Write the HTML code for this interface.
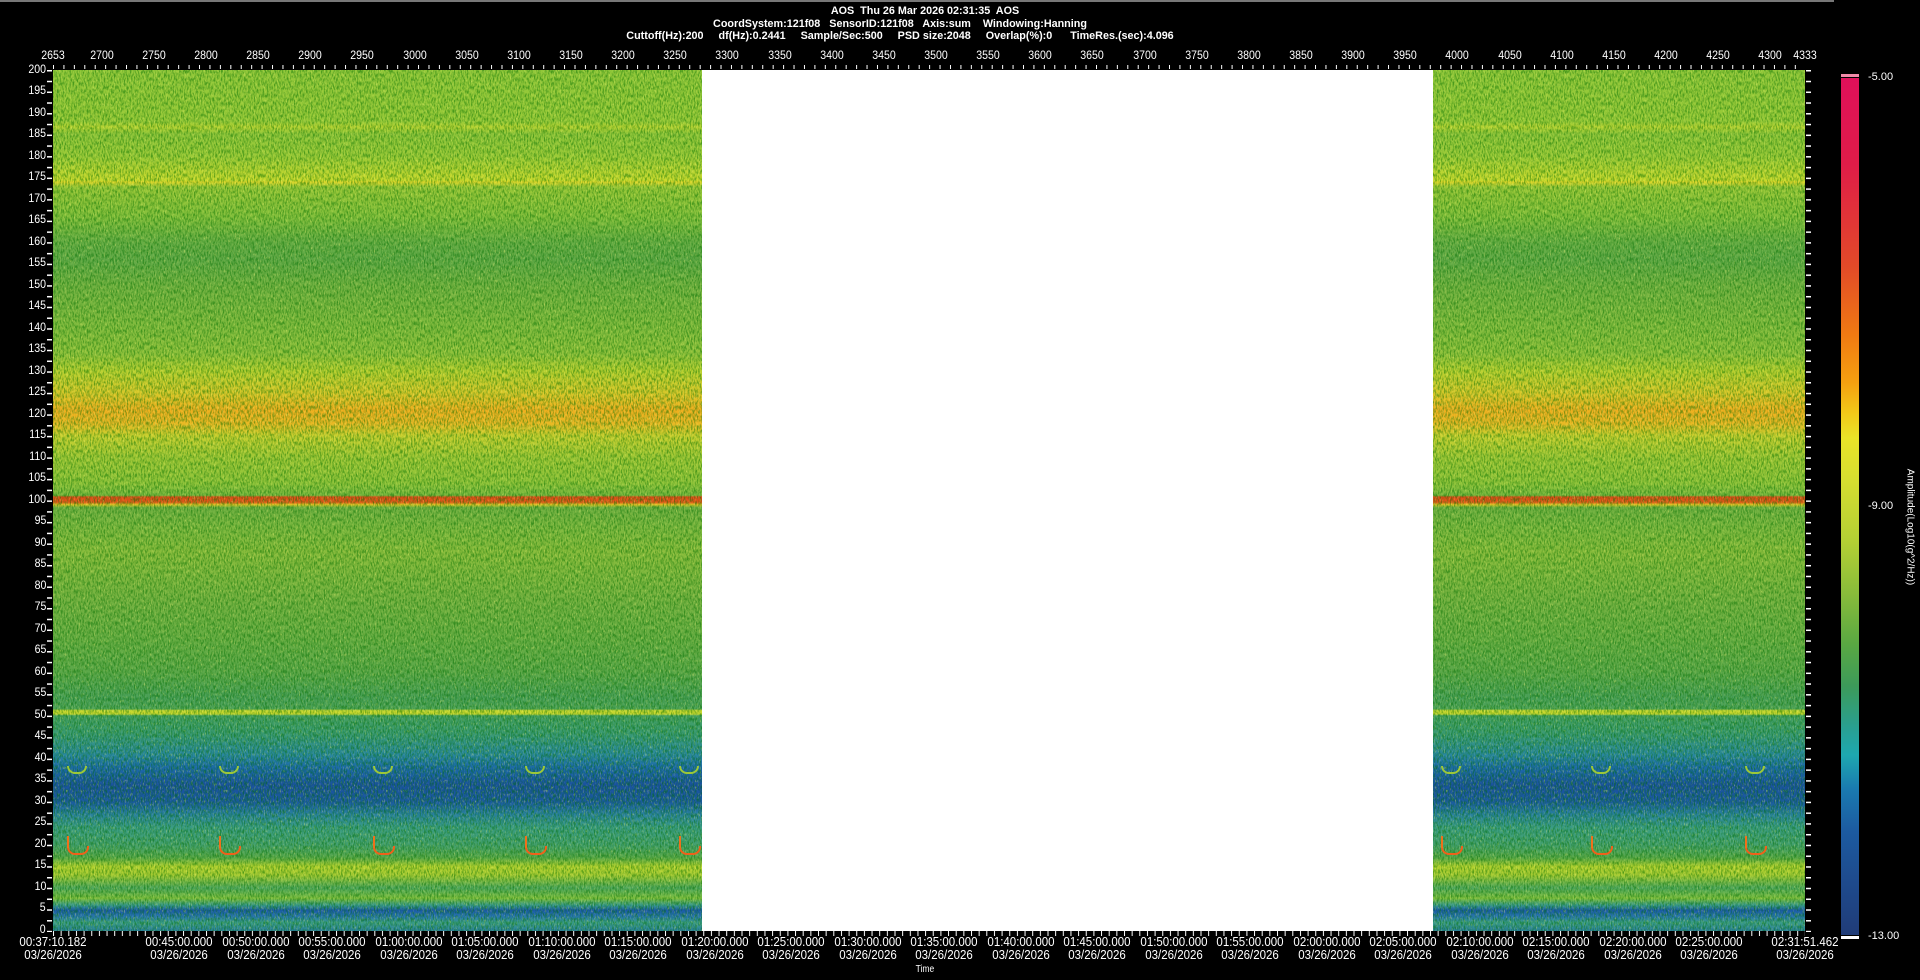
<!DOCTYPE html>
<html><head><meta charset="utf-8"><style>
*{margin:0;padding:0;box-sizing:border-box}
body{width:1920px;height:980px;background:#000;overflow:hidden;position:relative;font-family:"Liberation Sans",sans-serif;color:#fff}
.a{position:absolute;white-space:nowrap}
.hd{font-size:11px;font-weight:bold;transform:scaleX(.98);transform-origin:center;text-align:center;width:800px;left:500px}
.tl{font-size:12px;transform:translateX(-50%) scaleX(.88);top:48px}
.ll{font-size:12px;transform:scaleX(.88);transform-origin:right;right:1874px;text-align:right}
.bl{font-size:12.5px;transform:translateX(-50%) scaleX(.92);top:936px;text-align:center;line-height:13px}
.spec{position:absolute;top:70px;height:861px;background:linear-gradient(to bottom,
#92c83a 0%,#98ca38 6%,#b8d434 6.6%,#90c63a 7.4%,#9ccb38 10%,#c9da2e 12.8%,#e0d82c 13%,#9ac838 13.6%,#84c03c 17%,#68ae46 20%,#62aa48 22%,#72b242 25%,#82bc3e 30%,#90c23c 33%,#b8d030 35%,#d8c82a 37.5%,#f0b020 39.5%,#eab824 41%,#c8d030 42.5%,#a0c836 45%,#90c43a 48%,#78b840 49.4%,#e04a18 49.6%,#e05a18 50.2%,#e0c828 50.5%,#70b042 50.8%,#7cb840 53%,#88bc3c 56%,#74b242 62%,#68ae44 66%,#5ca84a 70%,#4aa05a 73%,#50a45a 74.2%,#c8d830 74.4%,#c8d830 74.8%,#44a064 75%,#3a9a74 77%,#2a88a0 79.5%,#1c6aaa 81%,#1a52a0 83%,#1a5aa0 85%,#2a82a0 86.5%,#3a9c84 88%,#44a070 90%,#58a84a 91.5%,#b4d230 92.5%,#a8cc34 93.5%,#50a860 95%,#80c040 96.2%,#3a9a90 97%,#1a5aa8 97.6%,#2a7ab0 98.4%,#3a9c88 99%,#2a80a0 100%);overflow:hidden}
.mk{position:absolute;width:22px;height:9px;border:2px solid #f0601a;border-top:none;border-radius:0 0 8px 8px}
.mk:before{content:"";position:absolute;left:-2px;top:-10px;width:2px;height:12px;background:#f0701a}
.mg{position:absolute;width:20px;height:8px;border:2px solid #9cc838;border-top:none;border-radius:0 0 8px 8px}
</style></head><body>
<div class="a" style="left:0;top:0;width:1834px;height:2px;background:#777"></div>
<div class="a hd" style="top:5px;left:525px">AOS&nbsp; Thu 26 Mar 2026 02:31:35&nbsp; AOS</div>
<div class="a hd" style="top:18px">CoordSystem:121f08&nbsp;&nbsp; SensorID:121f08&nbsp;&nbsp; Axis:sum&nbsp;&nbsp;&nbsp; Windowing:Hanning</div>
<div class="a hd" style="top:30px">Cuttoff(Hz):200&nbsp;&nbsp;&nbsp;&nbsp; df(Hz):0.2441&nbsp;&nbsp;&nbsp;&nbsp; Sample/Sec:500&nbsp;&nbsp;&nbsp;&nbsp; PSD size:2048&nbsp;&nbsp;&nbsp;&nbsp; Overlap(%):0&nbsp;&nbsp;&nbsp;&nbsp;&nbsp; TimeRes.(sec):4.096</div>

<svg class="a" style="left:0;top:0" width="1920" height="980">
<defs><pattern id="tt" x="53" y="0" width="10.43" height="80" patternUnits="userSpaceOnUse"><rect x="0" y="65" width="1" height="4" fill="#fff"/></pattern>
<pattern id="tb" x="53" y="0" width="7.65" height="980" patternUnits="userSpaceOnUse"><rect x="0" y="931" width="1" height="5" fill="#fff"/></pattern>
<pattern id="ty" x="0" y="70" width="20" height="10.76" patternUnits="userSpaceOnUse"><rect x="0" y="0" width="20" height="1.5" fill="#fff"/></pattern>
<filter id="n" x="0" y="0" width="100%" height="100%"><feTurbulence type="fractalNoise" baseFrequency="0.7 0.25" numOctaves="2" seed="3"/><feColorMatrix type="matrix" values="0 0 0 0 0  0 0 0 0 .15  0 0 0 0 0  0 0 0 -3 1.8"/></filter>
<filter id="n2" x="0" y="0" width="100%" height="100%"><feTurbulence type="fractalNoise" baseFrequency="0.8 0.3" numOctaves="2" seed="9"/><feColorMatrix type="matrix" values="0 0 0 0 .95  0 0 0 0 .95  0 0 0 0 .2  0 0 0 3 -1.7"/></filter>
</defs>
<rect x="53" y="64" width="1752" height="6" fill="url(#tt)"/>
<rect x="53" y="931" width="1752" height="6" fill="url(#tb)"/>
<rect x="47" y="70" width="5" height="862" fill="url(#ty)"/>
<rect x="1806" y="70" width="5" height="862" fill="url(#ty)"/>
</svg>

<div class="spec" style="left:53px;width:649px">
<svg width="649" height="861" style="position:absolute;left:0;top:0"><rect width="649" height="861" filter="url(#n)" opacity=".5"/><rect width="649" height="861" filter="url(#n2)" opacity=".5"/></svg>
<div class="mk" style="left:14px;top:776px"></div><div class="mk" style="left:166px;top:776px"></div><div class="mk" style="left:320px;top:776px"></div><div class="mk" style="left:472px;top:776px"></div><div class="mk" style="left:626px;top:776px"></div>
<div class="mg" style="left:14px;top:696px"></div><div class="mg" style="left:166px;top:696px"></div><div class="mg" style="left:320px;top:696px"></div><div class="mg" style="left:472px;top:696px"></div><div class="mg" style="left:626px;top:696px"></div>
</div>
<div class="a" style="left:702px;top:70px;width:731px;height:861px;background:#fff"></div>
<div class="spec" style="left:1433px;width:372px">
<svg width="372" height="861" style="position:absolute;left:0;top:0"><rect width="372" height="861" filter="url(#n)" opacity=".5"/><rect width="372" height="861" filter="url(#n2)" opacity=".5"/></svg>
<div class="mk" style="left:8px;top:776px"></div><div class="mk" style="left:158px;top:776px"></div><div class="mk" style="left:312px;top:776px"></div>
<div class="mg" style="left:8px;top:696px"></div><div class="mg" style="left:158px;top:696px"></div><div class="mg" style="left:312px;top:696px"></div>
</div>

<div class="a tl" style="left:53px">2653</div><div class="a tl" style="left:102px">2700</div><div class="a tl" style="left:154px">2750</div><div class="a tl" style="left:206px">2800</div><div class="a tl" style="left:258px">2850</div><div class="a tl" style="left:310px">2900</div><div class="a tl" style="left:362px">2950</div><div class="a tl" style="left:415px">3000</div><div class="a tl" style="left:467px">3050</div><div class="a tl" style="left:519px">3100</div><div class="a tl" style="left:571px">3150</div><div class="a tl" style="left:623px">3200</div><div class="a tl" style="left:675px">3250</div><div class="a tl" style="left:727px">3300</div><div class="a tl" style="left:780px">3350</div><div class="a tl" style="left:832px">3400</div><div class="a tl" style="left:884px">3450</div><div class="a tl" style="left:936px">3500</div><div class="a tl" style="left:988px">3550</div><div class="a tl" style="left:1040px">3600</div><div class="a tl" style="left:1092px">3650</div><div class="a tl" style="left:1145px">3700</div><div class="a tl" style="left:1197px">3750</div><div class="a tl" style="left:1249px">3800</div><div class="a tl" style="left:1301px">3850</div><div class="a tl" style="left:1353px">3900</div><div class="a tl" style="left:1405px">3950</div><div class="a tl" style="left:1457px">4000</div><div class="a tl" style="left:1510px">4050</div><div class="a tl" style="left:1562px">4100</div><div class="a tl" style="left:1614px">4150</div><div class="a tl" style="left:1666px">4200</div><div class="a tl" style="left:1718px">4250</div><div class="a tl" style="left:1770px">4300</div><div class="a tl" style="left:1805px">4333</div>

<div class="a ll" style="top:62px">200</div><div class="a ll" style="top:83px">195</div><div class="a ll" style="top:105px">190</div><div class="a ll" style="top:126px">185</div><div class="a ll" style="top:148px">180</div><div class="a ll" style="top:169px">175</div><div class="a ll" style="top:191px">170</div><div class="a ll" style="top:212px">165</div><div class="a ll" style="top:234px">160</div><div class="a ll" style="top:255px">155</div><div class="a ll" style="top:277px">150</div><div class="a ll" style="top:298px">145</div><div class="a ll" style="top:320px">140</div><div class="a ll" style="top:341px">135</div><div class="a ll" style="top:363px">130</div><div class="a ll" style="top:384px">125</div><div class="a ll" style="top:406px">120</div><div class="a ll" style="top:427px">115</div><div class="a ll" style="top:449px">110</div><div class="a ll" style="top:470px">105</div><div class="a ll" style="top:492px">100</div><div class="a ll" style="top:513px">95</div><div class="a ll" style="top:535px">90</div><div class="a ll" style="top:556px">85</div><div class="a ll" style="top:578px">80</div><div class="a ll" style="top:599px">75</div><div class="a ll" style="top:621px">70</div><div class="a ll" style="top:642px">65</div><div class="a ll" style="top:664px">60</div><div class="a ll" style="top:685px">55</div><div class="a ll" style="top:707px">50</div><div class="a ll" style="top:728px">45</div><div class="a ll" style="top:750px">40</div><div class="a ll" style="top:771px">35</div><div class="a ll" style="top:793px">30</div><div class="a ll" style="top:814px">25</div><div class="a ll" style="top:836px">20</div><div class="a ll" style="top:857px">15</div><div class="a ll" style="top:879px">10</div><div class="a ll" style="top:900px">5</div><div class="a ll" style="top:922px">0</div>

<div class="a bl" style="left:53px">00:37:10.182<br>03/26/2026</div>
<div class="a bl" style="left:179px">00:45:00.000<br>03/26/2026</div><div class="a bl" style="left:256px">00:50:00.000<br>03/26/2026</div><div class="a bl" style="left:332px">00:55:00.000<br>03/26/2026</div><div class="a bl" style="left:409px">01:00:00.000<br>03/26/2026</div><div class="a bl" style="left:485px">01:05:00.000<br>03/26/2026</div><div class="a bl" style="left:562px">01:10:00.000<br>03/26/2026</div><div class="a bl" style="left:638px">01:15:00.000<br>03/26/2026</div><div class="a bl" style="left:715px">01:20:00.000<br>03/26/2026</div><div class="a bl" style="left:791px">01:25:00.000<br>03/26/2026</div><div class="a bl" style="left:868px">01:30:00.000<br>03/26/2026</div><div class="a bl" style="left:944px">01:35:00.000<br>03/26/2026</div><div class="a bl" style="left:1021px">01:40:00.000<br>03/26/2026</div><div class="a bl" style="left:1097px">01:45:00.000<br>03/26/2026</div><div class="a bl" style="left:1174px">01:50:00.000<br>03/26/2026</div><div class="a bl" style="left:1250px">01:55:00.000<br>03/26/2026</div><div class="a bl" style="left:1327px">02:00:00.000<br>03/26/2026</div><div class="a bl" style="left:1403px">02:05:00.000<br>03/26/2026</div><div class="a bl" style="left:1480px">02:10:00.000<br>03/26/2026</div><div class="a bl" style="left:1556px">02:15:00.000<br>03/26/2026</div><div class="a bl" style="left:1633px">02:20:00.000<br>03/26/2026</div><div class="a bl" style="left:1709px">02:25:00.000<br>03/26/2026</div>
<div class="a bl" style="left:1805px">02:31:51.462<br>03/26/2026</div>
<div class="a" style="left:914px;top:964px;font-size:10px;transform:scaleX(.85)">Time</div>

<div class="a" style="left:1841px;top:74px;width:18px;height:3px;background:#f08aa8"></div>
<div class="a" style="left:1841px;top:78px;width:18px;height:857px;background:linear-gradient(to bottom,#e0105a 0%,#e01c48 10%,#e24a28 22%,#f07a12 30%,#f4a010 35.5%,#f2c818 39%,#eae428 42%,#d6de30 47%,#b4d034 54%,#8abc3a 60%,#5aa842 66%,#3c9a5a 71%,#28a094 76%,#1ea8b0 79%,#1a7ab0 83%,#1c5aa0 88%,#1e4a8c 94%,#203c78 100%)"></div>
<div class="a" style="left:1841px;top:936px;width:18px;height:3px;background:#fff"></div>
<div class="a" style="left:1868px;top:71px;font-size:11px">-5.00</div>
<div class="a" style="left:1868px;top:500px;font-size:11px">-9.00</div>
<div class="a" style="left:1868px;top:930px;font-size:11px">-13.00</div>
<div class="a" style="left:1910px;top:527px;font-size:10px;transform:translate(-50%,-50%) rotate(90deg)">Amplitude(Log10(g^2/Hz))</div>
</body></html>
